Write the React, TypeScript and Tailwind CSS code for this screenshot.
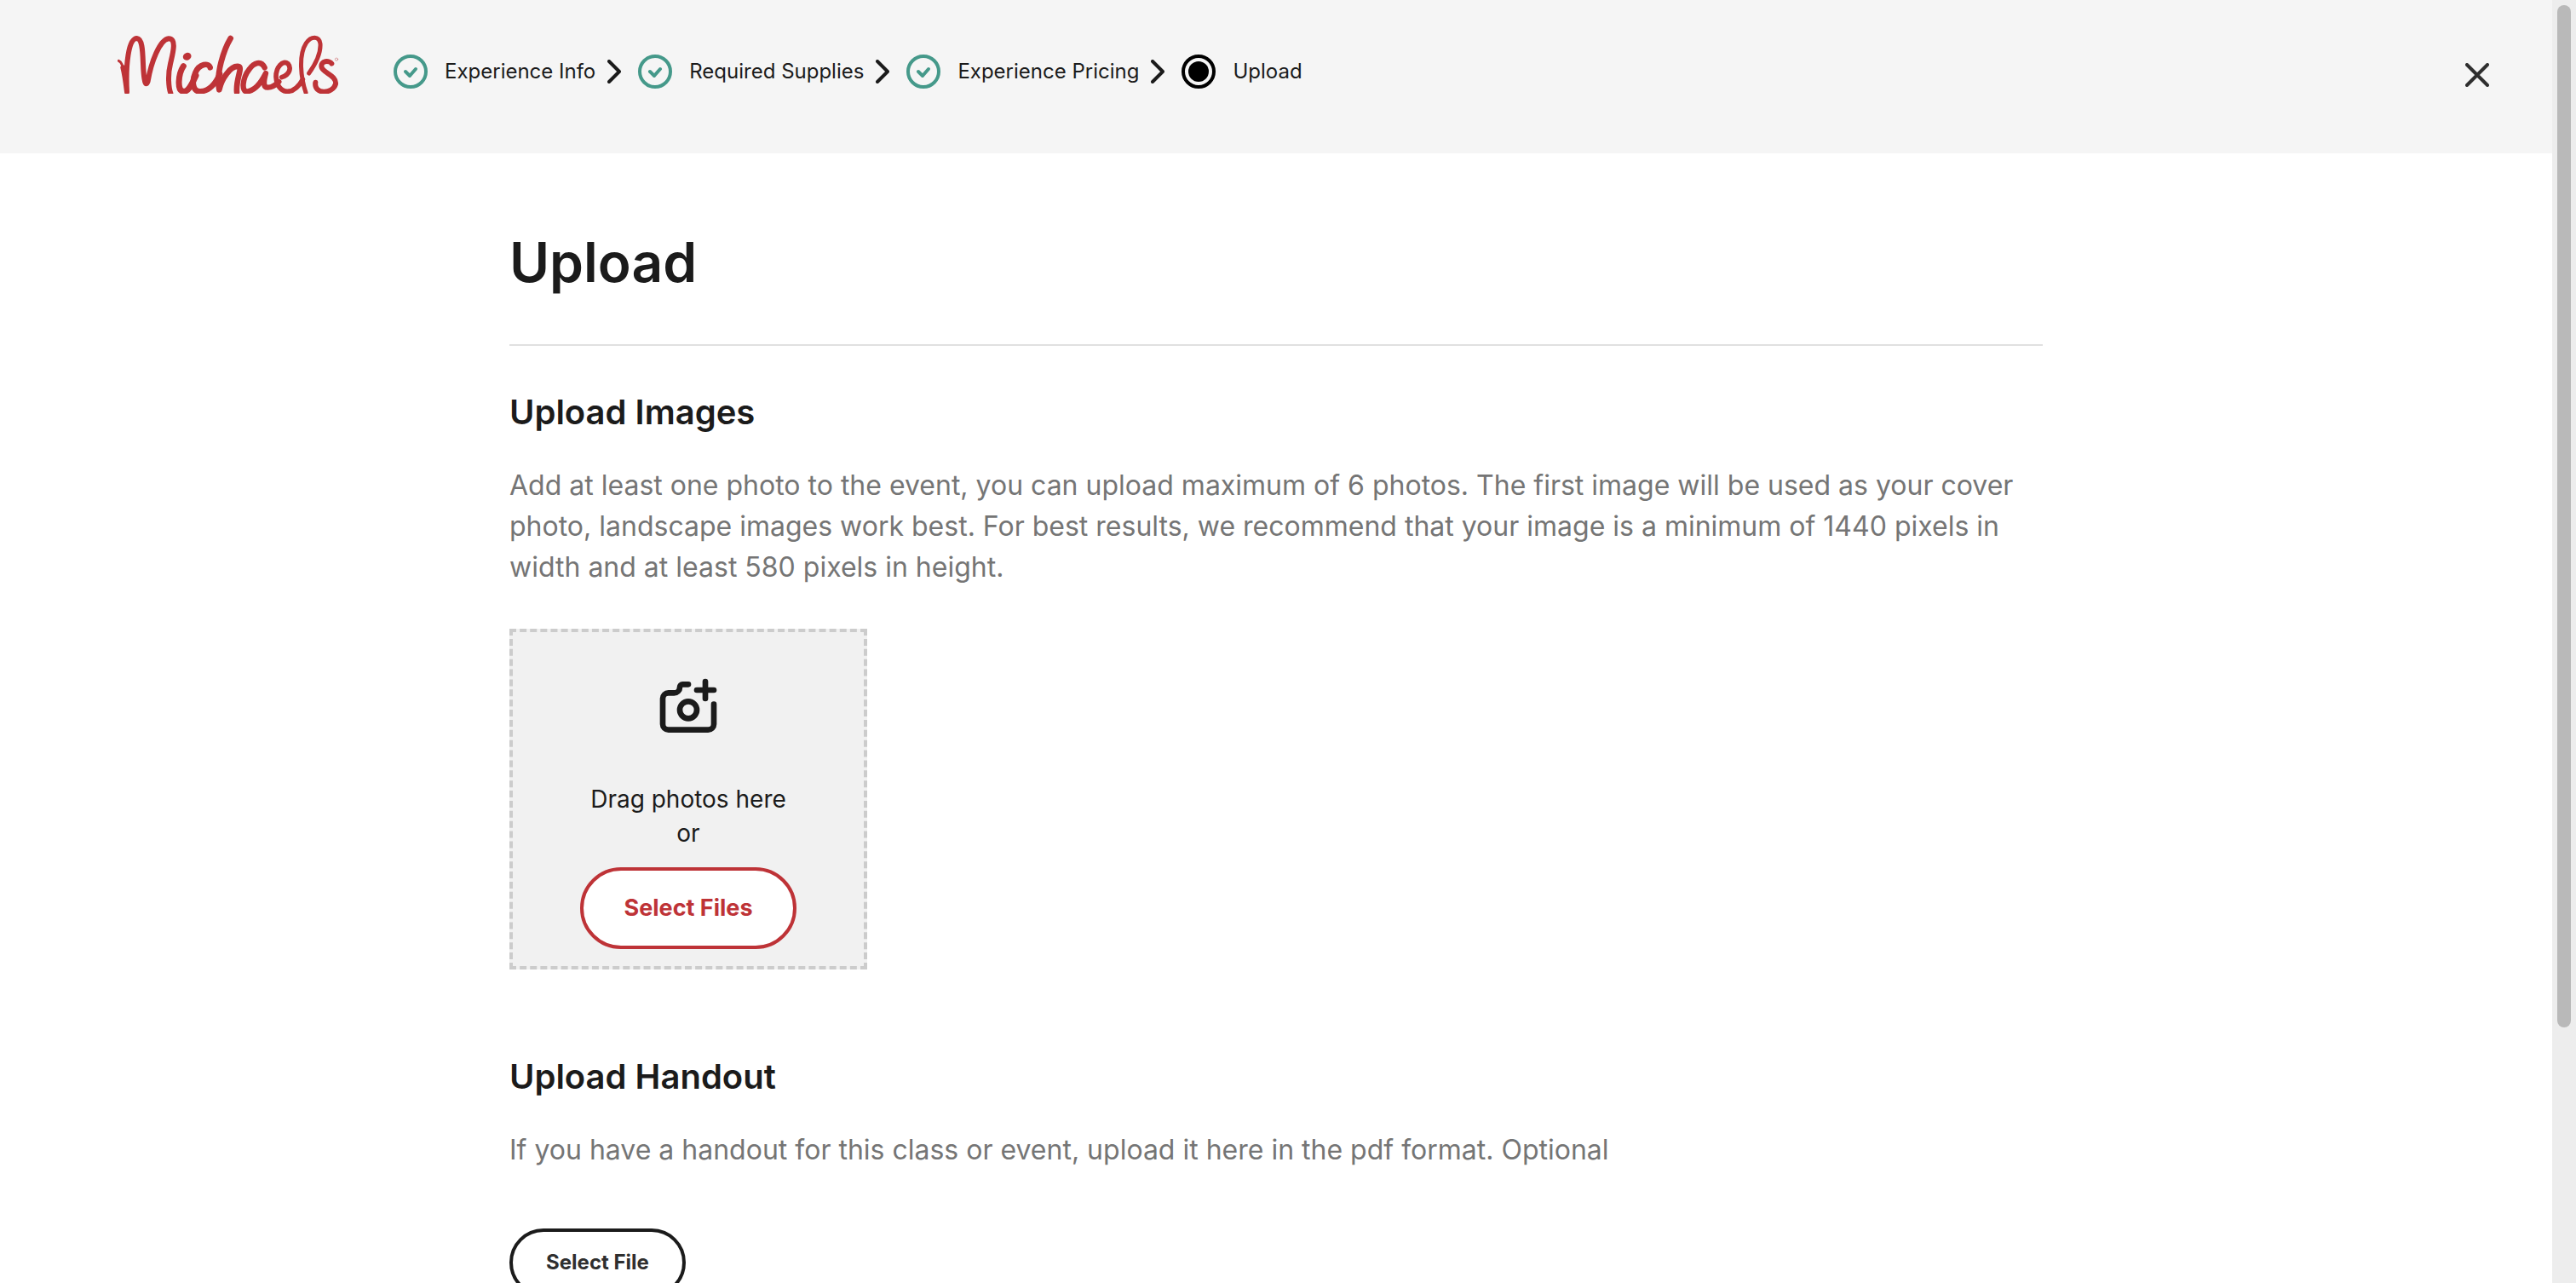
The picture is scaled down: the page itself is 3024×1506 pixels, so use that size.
import { Fragment } from "react";

const steps = [
  { label: "Experience Info", done: true },
  { label: "Required Supplies", done: true },
  { label: "Experience Pricing", done: true },
  { label: "Upload", done: false },
];

function Logo() {
  return (
    <svg
      viewBox="54 60 780 210"
      className="h-[70px] w-[260px] shrink-0 text-[#be3337]"
      fill="none"
      stroke="currentColor"
      strokeLinecap="round"
      strokeLinejoin="round"
      role="img"
      aria-label="Michaels"
    >
      <path strokeWidth="9" d="M58 154C68 158 74 172 78 200" />
      <path
        strokeWidth="18"
        d="M73 178C80 205 84 240 87 264C82 170 92 75 122 75C152 77 138 180 150 226Q154 244 161 226C172 160 202 80 234 76C264 76 248 130 240 165C230 205 234 250 241 268"
      />
      <ellipse cx="299" cy="139" rx="15" ry="13" fill="currentColor" stroke="none" transform="rotate(-25 299 139)" />
      <path strokeWidth="21" d="M286 173C268 200 262 260 286 262C304 264 316 236 330 206" />
      <path strokeWidth="20" d="M380 178C376 160 342 164 328 196C312 232 322 264 346 262C376 260 400 234 414 200" />
      <path strokeWidth="20" d="M452 75C428 115 400 200 412 256C420 218 452 170 480 174C496 178 470 218 474 264" />
      <path strokeWidth="19" d="M572 178C560 152 534 160 518 184C494 214 488 266 512 262C540 258 562 226 576 198C568 228 566 249 584 248C600 248 612 238 622 228" />
      <path strokeWidth="17" d="M632 212C662 202 666 178 654 164C636 150 612 176 612 210C614 244 632 262 652 262C680 262 696 238 706 220" />
      <path strokeWidth="15" d="M728 198C752 164 770 124 768 94C764 66 736 66 718 92C690 136 700 216 717 266" />
      <path strokeWidth="18" d="M808 164C802 152 766 152 773 178C780 198 826 206 822 236C812 272 744 274 751 230" />
      <circle cx="825" cy="149" r="5" strokeWidth="2" opacity="0.6" />
    </svg>
  );
}

function StepIcon({ done }: { done: boolean }) {
  return done ? (
    <svg viewBox="0 0 40 40" className="size-10 shrink-0 text-[#45998a]" fill="none" stroke="currentColor" strokeWidth="4" strokeLinecap="round" strokeLinejoin="round" aria-hidden="true">
      <circle cx="20" cy="20" r="18" />
      <path d="M14 20l5 5 7-8" />
    </svg>
  ) : (
    <svg viewBox="0 0 40 40" className="size-10 shrink-0 text-black" fill="none" stroke="currentColor" strokeWidth="4" aria-hidden="true">
      <circle cx="20" cy="20" r="18" />
      <circle cx="20" cy="20" r="12" fill="currentColor" stroke="none" />
    </svg>
  );
}

function Header() {
  return (
    <header className="flex h-[180px] shrink-0 items-start justify-between bg-[#f5f5f5] pr-[60px] pl-[138px]">
      <div className="flex items-start gap-16 pt-10">
        <Logo />
        <ol className="mt-6 flex items-center text-2xl leading-10">
          {steps.map((step, i) => (
            <Fragment key={step.label}>
              {i > 0 && (
                <li aria-hidden="true" className="mr-5 ml-3.5">
                  <svg viewBox="0 0 16 28" className="h-7 w-4" fill="none" stroke="currentColor" strokeWidth="4" strokeLinecap="round" strokeLinejoin="round">
                    <path d="M2 2l12 12L2 26" />
                  </svg>
                </li>
              )}
              <li className="flex items-center gap-5" aria-current={step.done ? undefined : "step"}>
                <StepIcon done={step.done} />
                <span className="whitespace-nowrap">{step.label}</span>
              </li>
            </Fragment>
          ))}
        </ol>
      </div>
      <button type="button" aria-label="Close" className="mt-[60px] flex size-14 items-center justify-center text-[#2f2f2f]">
        <svg viewBox="0 0 28 28" className="size-7" fill="none" stroke="currentColor" strokeWidth="4" strokeLinecap="round" aria-hidden="true">
          <path d="M2 2l24 24M26 2L2 26" />
        </svg>
      </button>
    </header>
  );
}

function CameraPlus() {
  return (
    <svg viewBox="0 0 24 24" className="size-20" fill="none" stroke="currentColor" strokeWidth="2" strokeLinecap="round" strokeLinejoin="round" aria-hidden="true">
      <path d="M12 4h-2a1 1 0 0 0-1 1 2 2 0 0 1-2 2H5a2 2 0 0 0-2 2v9a2 2 0 0 0 2 2h14a2 2 0 0 0 2-2v-7" />
      <circle cx="12" cy="13" r="3" />
      <path d="M15 6h6M18 3v6" />
    </svg>
  );
}

export default function App() {
  return (
    <div className="flex h-screen overflow-hidden bg-white font-['Inter',sans-serif] text-[#1b1b1b]">
      <div className="flex min-w-0 flex-1 flex-col overflow-hidden">
        <Header />
        <main className="mx-auto w-full max-w-[1800px] pt-[88px]">
          <h1 className="border-b-2 border-[#e0e0e0] pb-14 text-[64px] leading-[80px] font-semibold">Upload</h1>

          <section className="pt-[52px]">
            <h2 className="text-[40px] leading-[52px] font-semibold">Upload Images</h2>
            <p className="mt-9 text-[32px] leading-[48px] text-[#757575]">
              Add at least one photo to the event, you can upload maximum of 6 photos. The first image will be used as your cover photo, landscape images work best. For best results, we recommend that your image is a minimum of 1440 pixels in width and at least 580 pixels in height.
            </p>
            <div className="mt-12 flex w-[420px] flex-col items-center border-4 border-dashed border-[#cccccc] bg-[#f1f1f1] pt-12 pb-5">
              <CameraPlus />
              <p className="mt-12 text-center text-[28px] leading-10">
                Drag photos here
                <br />
                or
              </p>
              <button type="button" className="mt-5 h-24 w-[254px] rounded-full border-4 border-[#be3337] bg-white text-[27px] font-bold text-[#be3337]">
                Select Files
              </button>
            </div>
          </section>

          <section className="pt-[100px]">
            <h2 className="text-[40px] leading-[52px] font-semibold">Upload Handout</h2>
            <p className="mt-9 text-[32px] leading-[48px] text-[#757575]">
              If you have a handout for this class or event, upload it here in the pdf format. Optional
            </p>
            <button type="button" className="mt-[68px] h-20 w-[207px] rounded-full border-4 border-[#1b1b1b] bg-white text-2xl font-bold text-[#2f2f2f]">
              Select File
            </button>
          </section>
        </main>
      </div>
      <div className="w-7 shrink-0 bg-[#ededed] px-1.5 pt-1.5" aria-hidden="true">
        <div className="h-4/5 rounded-full bg-[#b9b9b9]" />
      </div>
    </div>
  );
}
